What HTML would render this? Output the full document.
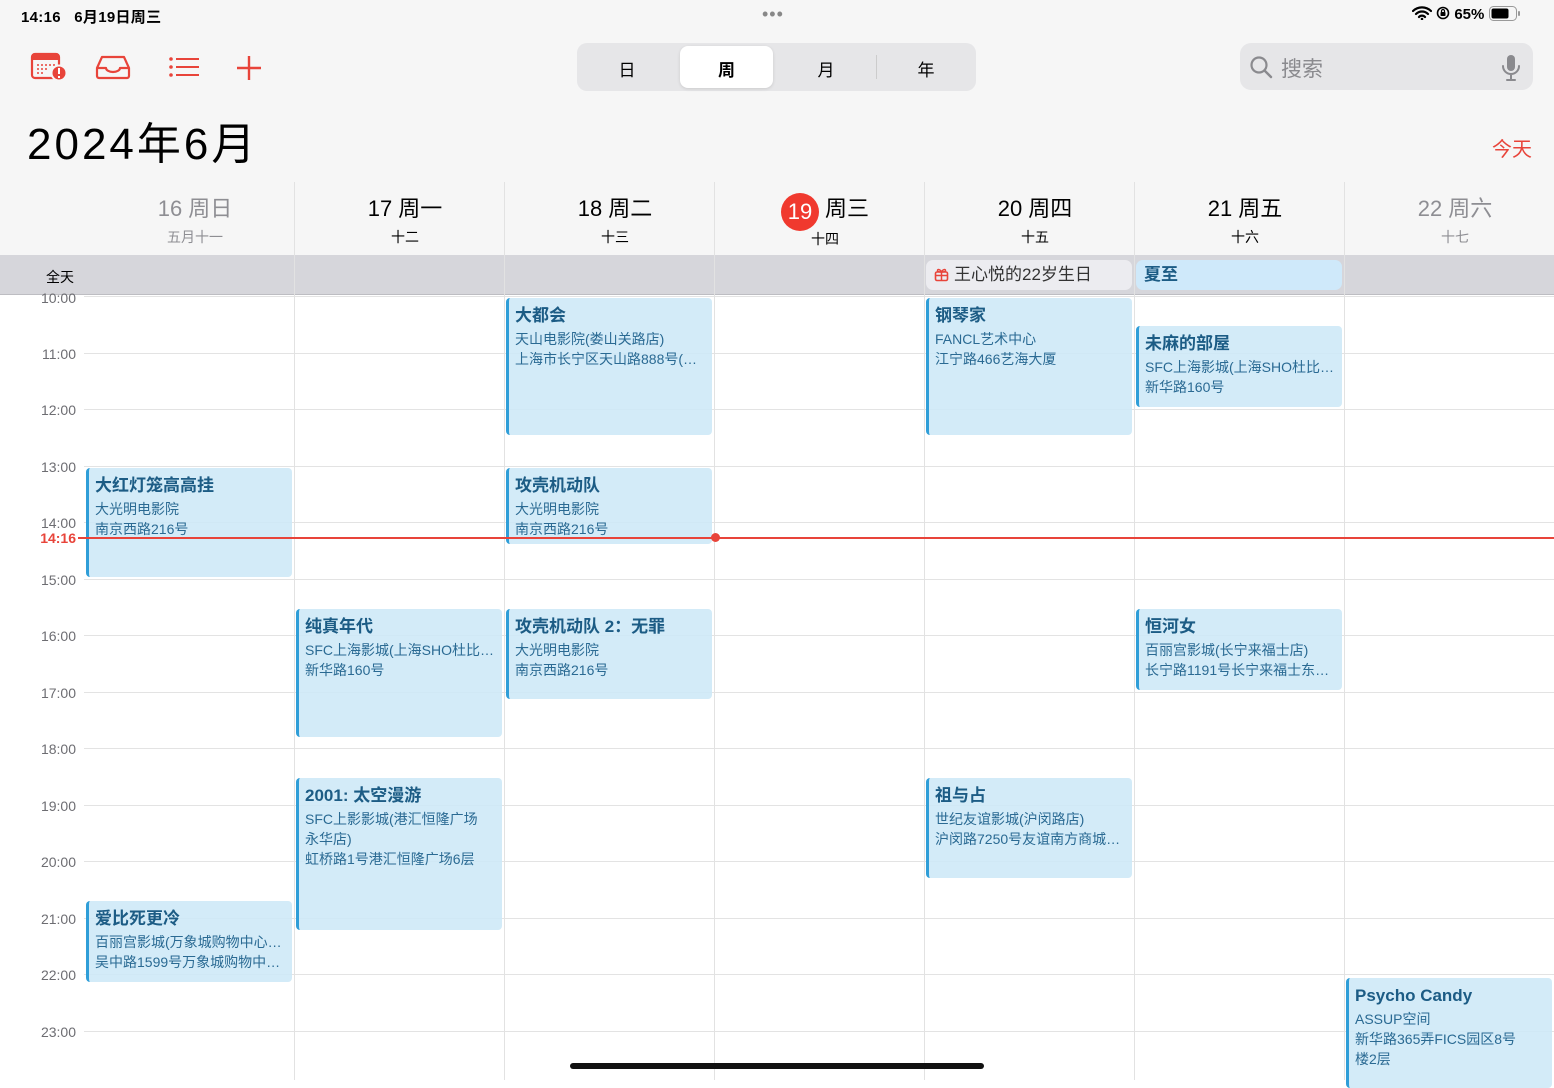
<!DOCTYPE html>
<html><head><meta charset="utf-8">
<style>
*{margin:0;padding:0;box-sizing:border-box}
body{width:1554px;height:1080px;overflow:hidden;background:#fff;font-family:"Liberation Sans","Noto Sans CJK SC",sans-serif;position:relative;color:#000}
.abs{position:absolute}
#top{left:0;top:0;width:1554px;height:255px;background:#f6f6f6}
.day{position:absolute;top:193px;width:210px;text-align:center}
.day .d{font-size:22px;line-height:32px}
.day .l{font-size:14px;line-height:20px;margin-top:2px}
.g{color:#8e8e93}
.vl{position:absolute;top:182px;width:1px;background:#e2e2e2;height:898px}
#allday{left:0;top:255px;width:1554px;height:40px;background:#d6d6db;border-bottom:1px solid #bdbdc2}
.hl{position:absolute;left:84px;width:1470px;height:1px;background:#e3e3e3}
.tl{position:absolute;left:0;width:76px;text-align:right;font-size:14px;color:#6d6d72;line-height:16px}
.ev{position:absolute;background:rgba(205,232,247,0.88);border-left:3px solid #2f9ed8;border-radius:4px;padding:4px 0 0 6px;overflow:hidden;white-space:nowrap}
.ev b{display:block;font-size:17px;color:#1c5c85;line-height:27px;font-weight:bold}
.ev span{display:block;font-size:14px;color:#2a6a93;line-height:20px;overflow:hidden;text-overflow:ellipsis}
</style></head><body>
<div id="top" class="abs"></div>
<div class="abs" style="left:21px;top:6px;font-size:15px;font-weight:bold;letter-spacing:0.3px">14:16&nbsp;&nbsp;&nbsp;6月19日周三</div>
<div class="abs" style="left:762px;top:4px;font-size:18px;color:#888;letter-spacing:1px">•••</div>
<div class="abs" style="left:1412px;top:6px;font-size:15px;font-weight:bold">
<svg width="20" height="14" viewBox="0 0 20 14" style="vertical-align:-1px"><path d="M1 5a13 13 0 0 1 18 0M4 8a8.5 8.5 0 0 1 12 0M7 11a4 4 0 0 1 6 0" stroke="#000" stroke-width="2.2" fill="none" stroke-linecap="round"/><circle cx="10" cy="13" r="1.3"/></svg>
<svg width="14" height="14" viewBox="0 0 14 14" style="vertical-align:-1px"><circle cx="7" cy="7" r="5.5" stroke="#000" stroke-width="1.6" fill="none"/><rect x="4.5" y="6" width="5" height="4" rx="0.8"/><path d="M5.5 6V5a1.5 1.5 0 0 1 3 0v1" stroke="#000" stroke-width="1.2" fill="none"/></svg>
65% <svg width="32" height="15" viewBox="0 0 32 15" style="vertical-align:-2px"><rect x="0.5" y="0.5" width="27" height="14" rx="4" stroke="#999" fill="none"/><rect x="2.5" y="2.5" width="17" height="10" rx="2"/><rect x="29" y="5" width="2" height="5" rx="1" fill="#999"/></svg></div>
<svg class="abs" style="left:30px;top:52px" width="38" height="30" viewBox="0 0 38 30"><rect x="2" y="2" width="27" height="24" rx="3" stroke="#e8443a" stroke-width="2.2" fill="none"/><rect x="2" y="2" width="27" height="6" fill="#e8443a"/><g fill="#e8443a"><circle cx="8" cy="13" r="1"/><circle cx="12" cy="13" r="1"/><circle cx="16" cy="13" r="1"/><circle cx="20" cy="13" r="1"/><circle cx="24" cy="13" r="1"/><circle cx="8" cy="17" r="1"/><circle cx="12" cy="17" r="1"/><circle cx="16" cy="17" r="1"/><circle cx="8" cy="21" r="1"/><circle cx="12" cy="21" r="1"/><circle cx="29" cy="21" r="7.5" stroke="#f6f6f6" stroke-width="2"/></g><rect x="28" y="16" width="2" height="6" fill="#fff"/><rect x="28" y="24" width="2" height="2" fill="#fff"/></svg>
<svg class="abs" style="left:95px;top:54px" width="36" height="26" viewBox="0 0 36 26"><path d="M2 14 L7 3 H29 L34 14 V22 a2 2 0 0 1 -2 2 H4 a2 2 0 0 1 -2 -2 Z M2 14 H11 a7 4 0 0 0 14 0 H34" stroke="#e8443a" stroke-width="2.2" fill="none" stroke-linejoin="round"/></svg>
<svg class="abs" style="left:168px;top:56px" width="32" height="22" viewBox="0 0 32 22"><g fill="#e8443a"><circle cx="3" cy="3" r="1.8"/><circle cx="3" cy="11" r="1.8"/><circle cx="3" cy="19" r="1.8"/><rect x="8" y="2" width="23" height="2"/><rect x="8" y="10" width="23" height="2"/><rect x="8" y="18" width="23" height="2"/></g></svg>
<svg class="abs" style="left:236px;top:55px" width="26" height="26" viewBox="0 0 26 26"><path d="M13 1V25M1 13H25" stroke="#e8443a" stroke-width="2.4"/></svg>
<div class="abs" style="left:577px;top:43px;width:399px;height:48px;background:#e6e6e8;border-radius:10px"></div>
<div class="abs" style="left:680px;top:46px;width:93px;height:42px;background:#fff;border-radius:8px;box-shadow:0 1px 3px rgba(0,0,0,0.12)"></div>
<div class="abs" style="left:876px;top:55px;width:1px;height:24px;background:#ccc"></div>
<div class="abs" style="left:577px;top:56px;width:100px;text-align:center;font-size:17px">日</div>
<div class="abs" style="left:680px;top:56px;width:93px;text-align:center;font-size:17px;font-weight:bold">周</div>
<div class="abs" style="left:776px;top:56px;width:100px;text-align:center;font-size:17px">月</div>
<div class="abs" style="left:876px;top:56px;width:100px;text-align:center;font-size:17px">年</div>
<div class="abs" style="left:1240px;top:43px;width:293px;height:47px;background:#e6e6e8;border-radius:11px"></div>
<svg class="abs" style="left:1249px;top:55px" width="24" height="24" viewBox="0 0 24 24"><circle cx="10" cy="10" r="7.5" stroke="#8a8a8e" stroke-width="2.2" fill="none"/><path d="M15.5 15.5L22 22" stroke="#8a8a8e" stroke-width="2.4" stroke-linecap="round"/></svg>
<div class="abs" style="left:1281px;top:53px;font-size:21px;color:#8a8a8e">搜索</div>
<svg class="abs" style="left:1501px;top:54px" width="20" height="28" viewBox="0 0 20 28"><rect x="6" y="1" width="8" height="16" rx="4" fill="#8a8a8e"/><path d="M2 12a8 8 0 0 0 16 0M10 20V25M6 26H14" stroke="#8a8a8e" stroke-width="2" fill="none" stroke-linecap="round"/></svg>
<div class="abs" style="left:27px;top:118px;font-size:44px;line-height:54px;letter-spacing:3px">2024年6月</div>
<div class="abs" style="left:1492px;top:133px;font-size:20px;color:#e8443a">今天</div>
<div class="day g" style="left:90px"><div class="d">16 周日</div><div class="l">五月十一</div></div>
<div class="day" style="left:300px"><div class="d">17 周一</div><div class="l">十二</div></div>
<div class="day" style="left:510px"><div class="d">18 周二</div><div class="l">十三</div></div>
<div class="day" style="left:720px"><div class="d"><span style="display:inline-block;width:38px;height:38px;border-radius:50%;background:#f0392e;color:#fff;line-height:38px;margin-right:6px;vertical-align:-3px">19</span>周三</div><div class="l" style="margin-top:-2px">十四</div></div>
<div class="day" style="left:930px"><div class="d">20 周四</div><div class="l">十五</div></div>
<div class="day" style="left:1140px"><div class="d">21 周五</div><div class="l">十六</div></div>
<div class="day g" style="left:1350px"><div class="d">22 周六</div><div class="l">十七</div></div>
<div id="allday" class="abs"></div>
<div class="abs" style="left:46px;top:267px;font-size:14px">全天</div>
<div class="abs" style="left:926px;top:260px;width:206px;height:30px;background:#ececf0;border-radius:7px;font-size:17px;color:#333;line-height:30px;padding-left:8px"><svg width="15" height="15" viewBox="0 0 15 15" style="vertical-align:-2px;margin-right:5px"><rect x="1.5" y="5" width="12" height="8.5" rx="1.5" stroke="#e8443a" stroke-width="1.6" fill="none"/><path d="M1.5 8.5H13.5M7.5 5V13.5M7.5 5C6 2 3.5 2 3.5 3.5S6 5 7.5 5C9 2 11.5 2 11.5 3.5S9 5 7.5 5" stroke="#e8443a" stroke-width="1.5" fill="none"/></svg>王心悦的22岁生日</div>
<div class="abs" style="left:1136px;top:260px;width:206px;height:30px;background:#cfe9fa;border-radius:7px;font-size:17px;color:#1c5c85;font-weight:bold;line-height:30px;padding-left:8px">夏至</div>
<div class="hl" style="top:296px"></div><div class="hl" style="top:353px"></div><div class="hl" style="top:409px"></div><div class="hl" style="top:466px"></div><div class="hl" style="top:522px"></div><div class="hl" style="top:579px"></div><div class="hl" style="top:635px"></div><div class="hl" style="top:692px"></div><div class="hl" style="top:748px"></div><div class="hl" style="top:805px"></div><div class="hl" style="top:861px"></div><div class="hl" style="top:918px"></div><div class="hl" style="top:974px"></div><div class="hl" style="top:1031px"></div>
<div class="tl" style="top:290px">10:00</div><div class="tl" style="top:346px">11:00</div><div class="tl" style="top:402px">12:00</div><div class="tl" style="top:459px">13:00</div><div class="tl" style="top:515px">14:00</div><div class="tl" style="top:572px">15:00</div><div class="tl" style="top:628px">16:00</div><div class="tl" style="top:685px">17:00</div><div class="tl" style="top:741px">18:00</div><div class="tl" style="top:798px">19:00</div><div class="tl" style="top:854px">20:00</div><div class="tl" style="top:911px">21:00</div><div class="tl" style="top:967px">22:00</div><div class="tl" style="top:1024px">23:00</div>
<div class="vl" style="left:294px"></div><div class="vl" style="left:504px"></div><div class="vl" style="left:714px"></div><div class="vl" style="left:924px"></div><div class="vl" style="left:1134px"></div><div class="vl" style="left:1344px"></div>
<div class="ev" style="left:506px;top:298px;width:206px;height:137px"><b>大都会</b><span>天山电影院(娄山关路店)</span><span>上海市长宁区天山路888号(…</span></div>
<div class="ev" style="left:926px;top:298px;width:206px;height:137px"><b>钢琴家</b><span>FANCL艺术中心</span><span>江宁路466艺海大厦</span></div>
<div class="ev" style="left:1136px;top:326px;width:206px;height:81px"><b>未麻的部屋</b><span>SFC上海影城(上海SHO杜比…</span><span>新华路160号</span></div>
<div class="ev" style="left:86px;top:468px;width:206px;height:109px"><b>大红灯笼高高挂</b><span>大光明电影院</span><span>南京西路216号</span></div>
<div class="ev" style="left:506px;top:468px;width:206px;height:76px"><b>攻壳机动队</b><span>大光明电影院</span><span>南京西路216号</span></div>
<div class="ev" style="left:296px;top:609px;width:206px;height:128px"><b>纯真年代</b><span>SFC上海影城(上海SHO杜比…</span><span>新华路160号</span></div>
<div class="ev" style="left:506px;top:609px;width:206px;height:90px"><b>攻壳机动队 2：无罪</b><span>大光明电影院</span><span>南京西路216号</span></div>
<div class="ev" style="left:1136px;top:609px;width:206px;height:81px"><b>恒河女</b><span>百丽宫影城(长宁来福士店)</span><span>长宁路1191号长宁来福士东…</span></div>
<div class="ev" style="left:296px;top:778px;width:206px;height:152px"><b>2001: 太空漫游</b><span>SFC上影影城(港汇恒隆广场</span><span>永华店)</span><span>虹桥路1号港汇恒隆广场6层</span></div>
<div class="ev" style="left:926px;top:778px;width:206px;height:100px"><b>祖与占</b><span>世纪友谊影城(沪闵路店)</span><span>沪闵路7250号友谊南方商城…</span></div>
<div class="ev" style="left:86px;top:901px;width:206px;height:81px"><b>爱比死更冷</b><span>百丽宫影城(万象城购物中心…</span><span>吴中路1599号万象城购物中…</span></div>
<div class="ev" style="left:1346px;top:978px;width:206px;height:110px"><b>Psycho Candy</b><span>ASSUP空间</span><span>新华路365弄FICS园区8号</span><span>楼2层</span></div>
<div class="abs" style="left:78px;top:537px;width:1476px;height:1.5px;background:#e8443a"></div>
<div class="abs" style="left:711px;top:533px;width:9px;height:9px;border-radius:50%;background:#e8443a"></div>
<div class="abs" style="left:0;top:530px;width:76px;text-align:right;font-size:14px;font-weight:bold;color:#e8443a;background:#fff;line-height:16px">14:16</div>
<div class="abs" style="left:570px;top:1063px;width:414px;height:6px;border-radius:3px;background:#111"></div>
</body></html>
